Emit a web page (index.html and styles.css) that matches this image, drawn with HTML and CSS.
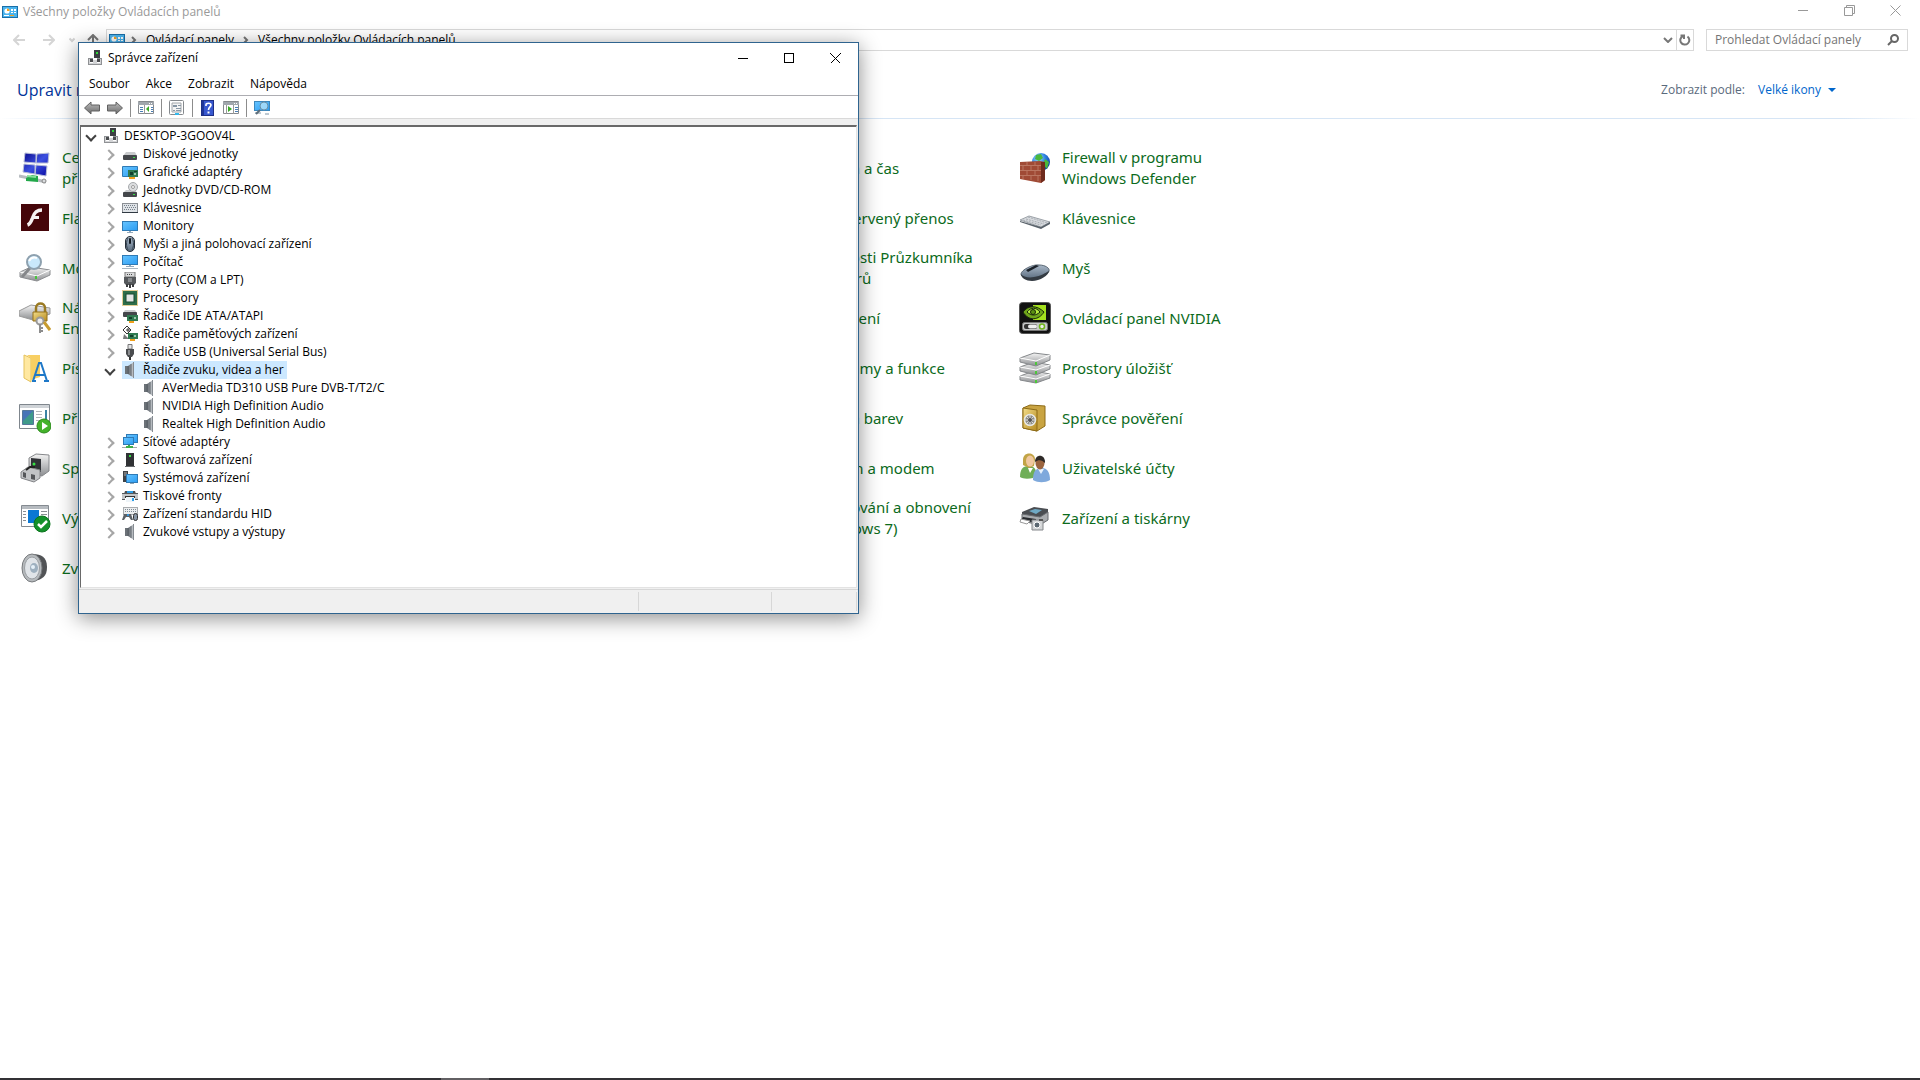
FILE: index.html
```html
<!DOCTYPE html>
<html lang="cs">
<head>
    <meta charset="UTF-8">
    <meta name="viewport" content="width=device-width, initial-scale=1.0">
    <link rel="stylesheet" href="styles.css">
    <title>Všechny položky Ovládacích panelů</title>
</head>
<body>

    <!-- icon definitions -->
    <svg class="sprite" aria-hidden="true">
        <defs>
            <linearGradient id="blue" x1="0" y1="0" x2="1" y2="1"><stop offset="0" stop-color="#66c4ff"/><stop offset="1" stop-color="#2b9cf2"/></linearGradient>
            <linearGradient id="metal" x1="0" y1="0" x2="0" y2="1"><stop offset="0" stop-color="#f4f4f4"/><stop offset="1" stop-color="#8d8f92"/></linearGradient>
            <linearGradient id="cone" x1="0" y1="0" x2="1" y2="0"><stop offset="0" stop-color="#5b6168"/><stop offset="1" stop-color="#d5d9dd"/></linearGradient>
            <linearGradient id="gold" x1="0" y1="0" x2="1" y2="1"><stop offset="0" stop-color="#f3dd8a"/><stop offset="1" stop-color="#b58a1f"/></linearGradient>
            <linearGradient id="navy" x1="0" y1="0" x2="1" y2="1"><stop offset="0" stop-color="#0a0a8c"/><stop offset="0.5" stop-color="#3c50e0"/><stop offset="1" stop-color="#0606a0"/></linearGradient>
            <linearGradient id="gray-arrow" x1="0" y1="0" x2="0" y2="1"><stop offset="0" stop-color="#bdbdbd"/><stop offset="1" stop-color="#6a6a6a"/></linearGradient>
            <linearGradient id="slate" x1="0" y1="0" x2="0" y2="1"><stop offset="0" stop-color="#a9b8c8"/><stop offset="1" stop-color="#5c6d80"/></linearGradient>
            <radialGradient id="globe" cx="0.35" cy="0.3" r="0.8"><stop offset="0" stop-color="#9fe0ff"/><stop offset="0.5" stop-color="#2c7fe0"/><stop offset="1" stop-color="#0b2f94"/></radialGradient>
        </defs>

        <symbol id="i-panel" viewBox="0 0 16 14">
            <rect x="0.5" y="1.5" width="15" height="11" fill="#4ab4ee" stroke="#1a6fa8"/>
            <circle cx="5" cy="6" r="2.6" fill="#fff"/><path d="M5 6V3.4A2.6 2.6 0 0 1 7.6 6z" fill="#f6a21d"/>
            <path d="M9 4h2v2H9zM12 4h2v2h-2zM9 7h2v1H9zM12 7h2v1h-2z" fill="#fff"/>
            <path d="M2 10h5v1H2z" fill="#fff"/><path d="M8 10h4v1H8z" fill="#f6a21d"/>
        </symbol>
        <symbol id="i-devices" viewBox="0 0 16 16">
            <rect x="7" y="0" width="6" height="10" fill="#3c3f43"/><rect x="9" y="2" width="2" height="2" fill="#2fd83a"/>
            <rect x="1.5" y="8.500" width="13" height="6" fill="#d3d4d6" stroke="#8f9194"/>
            <path d="M3 9h3v4H3zM10 9h3v4h-3z" fill="#4b4d50"/><path d="M3 12h3v1H3zM10 12h3v1h-3zM6 8h4v2H6z" fill="#fff"/>
        </symbol>
        <symbol id="i-disk" viewBox="0 0 16 16">
            <path d="M4 6h9l2 4H1z" fill="#c9cbcd"/><rect x="1" y="9" width="14" height="5" rx="1" fill="#44474b"/><rect x="11" y="11" width="2" height="1" fill="#37e045"/>
        </symbol>
        <symbol id="i-gpu" viewBox="0 0 16 16">
            <path d="M0.500 2.500h15v10h-15z" fill="url(#blue)" stroke="#2f7ab5"/><rect x="6" y="6" width="10" height="7" fill="#2f7a50"/>
            <path d="M8 8h3v3H8zM12 7h3v1h-3z" fill="#123f2b"/><circle cx="13" cy="10" r="1" fill="#bfe3cd"/><path d="M7 13h6v2H7z" fill="#f0a01c"/>
        </symbol>
        <symbol id="i-dvd" viewBox="0 0 16 16">
            <path d="M4 8h9l2 3H1z" fill="#c9cbcd"/><circle cx="11" cy="5" r="4.500" fill="#dcdee0" stroke="#a6a9ac"/><circle cx="11" cy="5" r="1.500" fill="#fff" stroke="#999"/>
            <rect x="1" y="10" width="14" height="5" rx="1" fill="#44474b"/><rect x="11" y="12" width="2" height="1" fill="#37e045"/>
        </symbol>
        <symbol id="i-keys" viewBox="0 0 16 16">
            <rect x="0.500" y="3.500" width="15" height="9" fill="#dfe3e7" stroke="#8b8f94"/><path d="M0 12h16v1H0z" fill="#303942"/>
            <path d="M2 5.500h12M3 7.500h11M2 9.500h12" stroke="#76808a" stroke-dasharray="1 1"/>
        </symbol>
        <symbol id="i-monitor" viewBox="0 0 16 16">
            <rect x="0.500" y="3.500" width="15" height="9" fill="url(#blue)" stroke="#2f7ab5"/><path d="M7 13h2v1H7zM5 14h6v1H5z" fill="#93a9bb"/>
        </symbol>
        <symbol id="i-mouse" viewBox="0 0 16 16">
            <rect x="3.500" y="0.500" width="9" height="15" rx="4.500" fill="url(#slate)" stroke="#242d38"/><path d="M6 2c-2 4-2 8 0 12M10 2c2 4 2 8 0 12" stroke="#364452" fill="none"/><rect x="7" y="2" width="2" height="6" rx="1" fill="#111820"/>
        </symbol>
        <symbol id="i-pc" viewBox="0 0 16 16">
            <rect x="0.500" y="1.500" width="15" height="9" fill="url(#blue)" stroke="#2f7ab5"/><path d="M7 11h2v1H7zM4 12h8v1H4z" fill="#93a9bb"/><path d="M0 14h16v1H0z" fill="#a9b7c3"/>
        </symbol>
        <symbol id="i-port" viewBox="0 0 16 16">
            <path d="M3 0h10v5H3z" fill="#d8d9da" stroke="#777"/><path d="M5 2h1v1H5zM7 2h1v1H7zM9 2h1v1H9z" fill="#444"/>
            <path d="M2 5h12v6l-2 2H4l-2-2z" fill="#55585b"/><path d="M6 6h4v4H6z" fill="#85888b"/><path d="M4 12h2v3H4zM10 12h2v3h-2zM7 12h2v4H7z" fill="#3a3c3f"/>
        </symbol>
        <symbol id="i-cpu" viewBox="0 0 16 16">
            <rect x="0.500" y="0.500" width="15" height="15" fill="none" stroke="#c79a2b" stroke-dasharray="1 1"/><rect x="1" y="1" width="14" height="14" fill="#2d6d4a"/><rect x="4" y="4" width="8" height="8" fill="#e4e6e5" stroke="#174a30"/>
        </symbol>
        <symbol id="i-ide" viewBox="0 0 16 16">
            <path d="M3 2h10l2 3H1z" fill="#c9cbcd"/><rect x="1" y="4" width="14" height="5" rx="1" fill="#44474b"/><rect x="5" y="7" width="11" height="6" fill="#2f7a50"/>
            <path d="M7 9h3v2H7z" fill="#123f2b"/><circle cx="13" cy="10" r="1" fill="#bfe3cd"/><path d="M7 13h5v2H7z" fill="#f0a01c"/>
        </symbol>
        <symbol id="i-mem" viewBox="0 0 16 16">
            <path d="M5 0l4 4-4 4-4-4z" fill="#fff" stroke="#333"/><path d="M4 4h4M6 2v4" stroke="#333"/><path d="M2 8l5 5H1z" fill="#77797b"/><rect x="6" y="7" width="10" height="6" fill="#2f7a50"/>
            <path d="M8 9h3v2H8z" fill="#123f2b"/><circle cx="13" cy="10" r="1" fill="#bfe3cd"/><path d="M8 13h5v2H8z" fill="#f0a01c"/>
        </symbol>
        <symbol id="i-usb" viewBox="0 0 16 16">
            <path d="M6 0.500h4V5H6z" fill="#e2e3e4" stroke="#777"/><path d="M4 5h8v5l-2 3H6l-2-3z" fill="#4a4c4f"/><path d="M6 6h2v5H6z" fill="#8a8c8f"/><path d="M7 13h2v3H7z" fill="#333"/>
        </symbol>
        <symbol id="i-sound" viewBox="0 0 16 16">
            <path d="M3 4h3v8H3z" fill="#6c7278"/><path d="M6 4l6-4v16l-6-4z" fill="url(#cone)"/><path d="M6 4v8M9 2v12" stroke="#4f555b" stroke-width="0.600"/><path d="M11 0h1v16h-1z" fill="#858b91"/>
        </symbol>
        <symbol id="i-net" viewBox="0 0 16 16">
            <rect x="4.500" y="0.500" width="11" height="8" fill="url(#blue)" stroke="#2f7ab5"/><rect x="1.500" y="3.500" width="10" height="7" fill="url(#blue)" stroke="#2f7ab5"/><path d="M6 11h2v2H6zM4 12h7v2H4z" fill="#3fae49"/><path d="M0 13h4v1H0zM11 13h4v1h-4z" fill="#a6a9ab"/>
        </symbol>
        <symbol id="i-soft" viewBox="0 0 16 16"><rect x="4" y="1" width="8" height="13" fill="#303235"/><rect x="7" y="3" width="2" height="2" fill="#35df42"/><path d="M3 14h10v1H3z" fill="#66696c"/></symbol>
        <symbol id="i-system" viewBox="0 0 16 16">
            <rect x="1" y="1" width="5" height="11" fill="#3e4246"/><path d="M2 3h3M2 5h3" stroke="#aaa"/><rect x="4.500" y="4.500" width="11" height="8" fill="url(#blue)" stroke="#2f7ab5"/><path d="M8 13h4v1H8z" fill="#8fa5b5"/>
        </symbol>
        <symbol id="i-printer" viewBox="0 0 16 16">
            <path d="M3 3h10l1 3H2z" fill="#4c4f53"/><path d="M5 3h6v3H5z" fill="#2f9fe8"/><path d="M0 6h16v6h-3V9H3v3H0z" fill="#c3c5c7"/><path d="M0 5h16v1H0zM0 11h3v1H0zM13 11h3v1h-3z" fill="#55585b"/><path d="M3 8h10v2H3z" fill="#333"/><path d="M4 9h8v5H4z" fill="#eef4f8"/><path d="M10 10h2v3h-2z" fill="#2f9fe8"/>
        </symbol>
        <symbol id="i-hid" viewBox="0 0 16 16">
            <rect x="1.500" y="1.500" width="14" height="7" fill="#eceeef" stroke="#a9acaf"/><path d="M3 3.500h11M3 5.500h11" stroke="#7f8b96" stroke-dasharray="1 1"/><path d="M0 14l2-6h7l2 6H9L7 11H4l-2 3z" fill="#5c6166"/><circle cx="6" cy="9" r="1" fill="#2ea5ff"/><rect x="11.500" y="7.500" width="4" height="7" rx="2" fill="#8795a5" stroke="#333"/>
        </symbol>

        <symbol id="t-back" viewBox="0 0 16 14"><path d="M0.500 7L7 1v3h8.500v6H7v3z" fill="url(#gray-arrow)" stroke="#606060"/></symbol>
        <symbol id="t-next" viewBox="0 0 16 14"><path d="M15.500 7L9 1v3H0.500v6H9v3z" fill="url(#gray-arrow)" stroke="#606060"/></symbol>
        <symbol id="t-tree" viewBox="0 0 16 14">
            <path d="M0.500 0.500h15v12h-15z" fill="#fff" stroke="#868a8e"/><path d="M0 1h16v3H0z" fill="#a1a7ad"/><path d="M11 2h1v1h-1zM13 2h1v1h-1z" fill="#fff"/><path d="M6.500 4v9" stroke="#999"/><path d="M2 6.500h3M2 8.500h3M2 10.500h3M13 6.500h2M13 8.500h2M13 10.500h2" stroke="#4a7fb5"/><path d="M11 5v6L8 8z" fill="#3aa925"/>
        </symbol>
        <symbol id="t-props" viewBox="0 0 16 16">
            <rect x="0.500" y="0.500" width="14" height="14" rx="1" fill="#fff" stroke="#85898d"/><path d="M3 3h9v9H3z" fill="#f4f4f4" stroke="#a2a6aa"/><path d="M4 5h4v2H4zM9 5h3v1H9zM4 8.500h2M7 8h5v1H7zM4 10h2v1H4zM7 10h5v1H7z" fill="#8897a5"/><path d="M6 13h4v2H6z" fill="#30b9ee"/>
        </symbol>
        <symbol id="t-help" viewBox="0 0 14 16"><rect x="0.500" y="0.500" width="12" height="15" fill="#3757cf" stroke="#1e2f86"/><path d="M1 1h2v14H1z" fill="#1e3598"/><path d="M5 6V4.500C5 3 10 2.500 10 5c0 2-2.500 2-2.500 5" fill="none" stroke="#fff" stroke-width="1.600"/><path d="M6.500 11.500h2v2h-2z" fill="#fff"/></symbol>
        <symbol id="t-actions" viewBox="0 0 16 14">
            <path d="M0.500 0.500h15v12h-15z" fill="#fff" stroke="#868a8e"/><path d="M0 1h16v3H0z" fill="#a1a7ad"/><path d="M11 2h1v1h-1zM13 2h1v1h-1z" fill="#fff"/><path d="M10.500 4v9M3.500 4v9" stroke="#999"/><path d="M12 6.500h3M12 8.500h3M12 10.500h3" stroke="#4a7fb5"/><path d="M5 5v6l4-3z" fill="#3aa925"/>
        </symbol>
        <symbol id="t-scan" viewBox="0 0 16 16">
            <rect x="0.500" y="1.500" width="15" height="9" fill="url(#blue)" stroke="#3d88bd"/><path d="M1 13h6M11 14h4" stroke="#7d93a5"/><path d="M6 10l-4 4" stroke="#5d6c78" stroke-width="2"/><circle cx="10" cy="6" r="4" fill="#b3e2fa" fill-opacity="0.800" stroke="#6a90a8"/>
        </symbol>

        <symbol id="b-network" viewBox="0 0 32 32">
            <path d="M6 1l11 1v9L5 10zM18 2l12-1-1 10H17zM5 12l11 1v9L4 20zM17 13l11 1-1 10-11-2z" fill="url(#navy)" stroke="#b9bfd8"/>
            <path d="M0 24l10 2 17 4" stroke="#b7bcc0" stroke-width="3"/><path d="M7 26l6-3 6 1v6l-12-1z" fill="#22a84a"/><path d="M8 24l9 1" stroke="#86e09b" stroke-width="2"/><circle cx="25" cy="29" r="2" fill="#d8dbdd" stroke="#888"/>
        </symbol>
        <symbol id="b-flash" viewBox="0 0 32 32">
            <rect x="2" y="2" width="28" height="27" fill="#450509"/><path d="M23 8c-6 0-8 3-9.500 8-1.500 4-2 6-5 7" fill="none" stroke="#f6f1f1" stroke-width="3.500"/><path d="M13 15.500h7" stroke="#f6f1f1" stroke-width="3"/>
        </symbol>
        <symbol id="b-index" viewBox="0 0 32 32">
            <path d="M1 20l11-5 19 3v5l-13 6-17-4z" fill="url(#metal)" stroke="#8b8d90"/><path d="M1 20l17 4 13-6" fill="none" stroke="#fff"/><path d="M11 16L3 25" stroke="#85878a" stroke-width="3"/><circle cx="15" cy="10" r="7" fill="#c9e8fb" stroke="#8ea1af" stroke-width="2"/><path d="M10 9c2-4 5-4 8-3" stroke="#fff" stroke-width="2" fill="none"/><path d="M16 24h2v3h-2z" fill="#46c53a"/>
        </symbol>
        <symbol id="b-lock" viewBox="0 0 32 32">
            <path d="M0 9l12-6 19 3v6L14 18 0 14z" fill="url(#metal)" stroke="#999"/><path d="M17 11V6c0-6 9-6 9 0v5" fill="none" stroke="#9a7a22" stroke-width="2.500"/><path d="M14 10h14v9H14z" fill="url(#gold)" stroke="#94701a"/>
            <circle cx="21" cy="19" r="3.500" fill="#eee" stroke="#999" stroke-width="2"/><path d="M21 22v9M21 26h3M21 29h3" stroke="#8d8d8d" stroke-width="2"/><path d="M25 20l6 8" stroke="#c79b2e" stroke-width="3"/>
        </symbol>
        <symbol id="b-fonts" viewBox="0 0 32 32">
            <path d="M5 3l7 3v24l-7-4z" fill="#ffe8a0" stroke="#e5c25d"/><path d="M8 3h13v22l-9 3V6z" fill="#f8cf63"/><path d="M14 29l6-18h2l6 18M16.500 23h9M13 29h4M25 29h5" fill="none" stroke="#1e78c8" stroke-width="2"/>
        </symbol>
        <symbol id="b-remote" viewBox="0 0 32 32">
            <path d="M0.500 2.500h30v24h-30z" fill="#fff" stroke="#7f868d"/><path d="M1 3h29v3H1z" fill="#cfd3d7"/><path d="M3.500 8.500h11v14h-11z" fill="#3f9a8a" stroke="#56779a"/><path d="M4 9h10L4 19z" fill="#4774b7"/><path d="M17 9.500h6M17 12.500h6M17 15.500h6M17 18.500h5" stroke="#b2b6ba"/><path d="M26 8h2v12h-2z" fill="#3b83a5"/><circle cx="25" cy="24" r="7" fill="#43b22a" stroke="#2b8a1b"/><path d="M23 20l6 4-6 4z" fill="#fff"/>
        </symbol>
        <symbol id="b-devman" viewBox="0 0 32 32">
            <path d="M10 6l7-4 13 1v16l-7 5-13-2z" fill="url(#metal)" stroke="#85878a"/><path d="M12 6l10 1v13l-10-1z" fill="#303236"/><circle cx="15" cy="12" r="1.500" fill="#35e143"/><path d="M2 20l7-5 12 3v8l-6 4-13-4z" fill="#c2c4c6" stroke="#828487"/><path d="M4 20l3 1v5l-3-1zM12 22l4 1v5l-4-1z" fill="#55575a"/><path d="M7 18l4-3h5" stroke="#222" stroke-width="2" fill="none"/>
        </symbol>
        <symbol id="b-default" viewBox="0 0 32 32">
            <path d="M2.500 3.500h27v21h-27z" fill="#fff" stroke="#858b91"/><path d="M3 4h26v3H3z" fill="#b6bbc0"/><path d="M9 8h11v13H9z" fill="#0b78d4"/><path d="M4 9.500h3M4 12.500h3M4 15.500h3M4 18.500h3M22 9.500h6M22 12.500h6" stroke="#8a8f94"/><circle cx="23" cy="22" r="8" fill="#14912a" stroke="#0b741e"/><path d="M19 22l3 3 6-6" fill="none" stroke="#fff" stroke-width="2.500"/>
        </symbol>
        <symbol id="b-speaker" viewBox="0 0 32 32">
            <path d="M14 2c8 0 14 3 14 13s-5 12-12 14z" fill="#515356"/><ellipse cx="13" cy="16" rx="10" ry="14" fill="#b6babd" stroke="#777a7d"/><ellipse cx="13" cy="16" rx="7.500" ry="11" fill="#e0e4e8" stroke="#9b9fa3"/><ellipse cx="15" cy="16" rx="4" ry="5" fill="#9eb0bf"/><circle cx="14" cy="15" r="2" fill="#e5f0f8"/>
        </symbol>
        <symbol id="b-firewall" viewBox="0 0 32 32">
            <circle cx="22" cy="10" r="9" fill="url(#globe)"/><path d="M17 3l5-1 2 4-4 3-4-2zM26 7l4 3-2 7-4-5z" fill="#4bb83d"/>
            <path d="M1 10l20-1 5 1v18l-4 3-21-4z" fill="#a04a35"/><path d="M22 10l4 0v18l-4 3z" fill="#6f2b1d"/><path d="M1 13.500h21M1 18.500h21M1 23.500h21M8 10v3M16 10v3M4 14v4M12 14v4M19 14v4M8 19v4M16 19v4M4 24v3M12 24v4M19 24v5" stroke="#c58872" stroke-width="0.700" fill="none"/>
        </symbol>
        <symbol id="b-keyboard" viewBox="0 0 32 32">
            <path d="M1 18l9-4 21 6-9 5z" fill="#d7dade" stroke="#9da3a9"/><path d="M1 19l21 6 9-5v2l-9 5L1 20z" fill="#59626b"/><path d="M4 18l18 5M7 17l18 5M9 15l19 6" stroke="#a9aeb4" stroke-dasharray="2 1"/>
        </symbol>
        <symbol id="b-mouse" viewBox="0 0 32 32">
            <path d="M2 22c0-4 12-10 18-9 6 0 11 3 10 6 0 3-11 8-18 8-5 0-10-2-10-5z" fill="url(#slate)" stroke="#596673"/><path d="M2 22c2 3 8 4 13 3 7-1 11-4 15-6 0 4-9 10-17 10-6 0-11-3-11-7z" fill="#343b43"/><path d="M7 18l10-5 3 1-11 6z" fill="#1c232b"/>
        </symbol>
        <symbol id="b-nvidia" viewBox="0 0 32 32">
            <rect x="0.500" y="0.500" width="31" height="31" rx="3" fill="#111" stroke="#555"/><path d="M14 3h13v15H14z" fill="#a4e01e"/><path d="M4 10c5-7 14-7 21 0-5 8-15 10-21 0z" fill="#6fa51b" stroke="#16240a"/><path d="M8 10c4-5 9-5 13 0-4 4-9 4-13 0z" fill="#b6ee3e" stroke="#16240a"/><circle cx="14" cy="10" r="2.500" fill="#5c9212" stroke="#16240a"/><rect x="3.500" y="20.500" width="25" height="8" rx="2" fill="#c7c9c9" stroke="#777"/><rect x="5" y="22" width="13" height="5" rx="2" fill="#333"/><rect x="9" y="22.500" width="9" height="4" rx="2" fill="#eee"/><circle cx="23" cy="24.500" r="2.500" fill="#eee" stroke="#70b51c" stroke-width="1.500"/>
        </symbol>
        <symbol id="b-storage" viewBox="0 0 32 32">
            <path d="M1 24l14-5 16 3v4l-14 5-16-3z" fill="url(#metal)" stroke="#85888b"/><path d="M1 24l16 3 14-5" fill="none" stroke="#fff"/><path d="M16 28h2v3h-2z" fill="#4cc83a"/>
            <path d="M1 15l14-5 16 3v4l-14 6-16-4z" fill="url(#metal)" stroke="#85888b"/><path d="M1 15l16 3 14-5" fill="none" stroke="#fff"/><path d="M16 19h2v3h-2z" fill="#4cc83a"/>
            <path d="M1 6l14-5 16 2v5l-14 6-16-4z" fill="url(#metal)" stroke="#85888b"/><path d="M1 6l16 3 14-6" fill="none" stroke="#fff"/><path d="M16 10h2v3h-2z" fill="#4cc83a"/>
        </symbol>
        <symbol id="b-safe" viewBox="0 0 32 32">
            <path d="M4 6l7-3 15 1v20l-8 5-14-3z" fill="#c9a442" stroke="#8d6b17"/><path d="M4 6l14 2v21L4 26z" fill="url(#gold)" stroke="#8d6b17"/><circle cx="11" cy="18" r="5.500" fill="#8e8e88" stroke="#e9e9e4" stroke-width="1.500"/><path d="M11 12v12M5 18h12M7 14l8 8M15 14l-8 8" stroke="#ddd"/><circle cx="11" cy="18" r="2" fill="#555"/>
        </symbol>
        <symbol id="b-users" viewBox="0 0 32 32">
            <path d="M1 25c0-8 3-11 9-11 5 0 7 3 7 7l-3 5c-5 1-10 1-13-1z" fill="#6fae57"/><path d="M9 16l2 5 3-5z" fill="#fff"/><path d="M4 8c0-9 12-8 12-1l-1 7-5 2-6-3z" fill="#c2a446"/><ellipse cx="11" cy="9" rx="4" ry="5.500" fill="#f0c8a0"/>
            <path d="M14 28c0-8 2-12 9-12 5 0 8 4 8 12-5 3-12 3-17 0z" fill="#7fa9dc"/><path d="M19 17l3 5 3-5z" fill="#e8f2fc"/><ellipse cx="21" cy="11" rx="4.500" ry="6.500" fill="#9b6540"/><path d="M16 10c0-9 11-8 10 1-3-3-6-4-10-1z" fill="#2e2a28"/>
        </symbol>
        <symbol id="b-printer" viewBox="0 0 32 32">
            <path d="M3 10l12-5 14 2v5l-8 5-18-4z" fill="#4a4d51"/><path d="M10 9l6-2 7 1-6 4z" fill="#6fa9c4"/><path d="M3 12l18 3 8-5v8l-8 5-18-4z" fill="#a9acaf" stroke="#686b6f"/><path d="M4 15l13 2v4L2 18z" fill="#292c30"/><path d="M2 17l9 2-3 3-7-2z" fill="#fff" stroke="#999"/>
            <path d="M13 18h11v10H13z" fill="#d4d6d8" stroke="#85888b"/><path d="M20 17h4v2h-4z" fill="#555"/><circle cx="18" cy="23" r="3" fill="#5c6872" stroke="#fff"/>
        </symbol>
    </svg>

    <main class="explorer">
        <header class="titlebar">
            <svg class="icon-sm"><use href="#i-panel"/></svg>
            <h1>Všechny položky Ovládacích panelů</h1>
            <div class="win-buttons">
                <button aria-label="Minimalizovat"><svg viewBox="0 0 11 11"><path d="M0 5.500h10"/></svg></button>
                <button aria-label="Obnovit"><svg viewBox="0 0 11 11"><path d="M0.500 2.500h8v8h-8zM2.500 2.500v-2h8v8h-2"/></svg></button>
                <button aria-label="Zavřít"><svg viewBox="0 0 11 11"><path d="M0.500 0.500l10 10M10.500 0.500l-10 10"/></svg></button>
            </div>
        </header>

        <nav class="navbar">
            <div class="history">
                <button aria-label="Zpět"><svg viewBox="0 0 12 12"><path d="M12 6H1M6 1L1 6l5 5"/></svg></button>
                <button aria-label="Vpřed"><svg viewBox="0 0 12 12"><path d="M0 6h11M6 1l5 5-5 5"/></svg></button>
                <button class="recent" aria-label="Poslední umístění"><svg viewBox="0 0 6 6"><path d="M0.500 1.500L3 4l2.500-2.500"/></svg></button>
                <button class="up" aria-label="Nahoru"><svg viewBox="0 0 12 12"><path d="M6 12V1M1 6l5-5 5 5"/></svg></button>
            </div>
            <div class="address">
                <svg class="icon-sm"><use href="#i-panel"/></svg>
                <svg class="crumb-arrow" viewBox="0 0 6 8"><path d="M1 1l3 3-3 3"/></svg>
                <a href="#">Ovládací panely</a>
                <svg class="crumb-arrow" viewBox="0 0 6 8"><path d="M1 1l3 3-3 3"/></svg>
                <a href="#">Všechny položky Ovládacích panelů</a>
                <button class="drop" aria-label="Předchozí umístění"><svg viewBox="0 0 10 6"><path d="M1 1l4 4 4-4"/></svg></button>
                <button class="refresh" aria-label="Aktualizovat"><svg viewBox="0 0 12 12"><path d="M8.500 2.500A4.500 4.500 0 1 1 4 2M1.500 1.500H5V5"/></svg></button>
            </div>
            <div class="search">
                <input type="text" aria-label="Prohledat Ovládací panely" placeholder="Prohledat Ovládací panely">
                <svg viewBox="0 0 12 12"><circle cx="7.500" cy="4.500" r="3.500"/><path d="M5 7l-4 4"/></svg>
            </div>
        </nav>

        <section class="heading">
            <h2>Upravit nastavení počítače</h2>
            <div class="view-by">
                <span>Zobrazit podle:</span>
                <button>Velké ikony<i class="caret"></i></button>
            </div>
        </section>

        <div class="items">
            <div class="column first">
                <a href="#"><svg><use href="#b-network"/></svg><span>Centrum síťových<br>připojení a sdílení</span></a>
                <a href="#"><svg><use href="#b-flash"/></svg><span>Flash Player</span></a>
                <a href="#"><svg><use href="#b-index"/></svg><span>Možnosti indexování</span></a>
                <a href="#"><svg><use href="#b-lock"/></svg><span>Nástroj BitLocker Drive<br>Encryption</span></a>
                <a href="#"><svg><use href="#b-fonts"/></svg><span>Písma</span></a>
                <a href="#"><svg><use href="#b-remote"/></svg><span>Připojení RemoteApp</span></a>
                <a href="#"><svg><use href="#b-devman"/></svg><span>Správce zařízení</span></a>
                <a href="#"><svg><use href="#b-default"/></svg><span>Výchozí programy</span></a>
                <a href="#"><svg><use href="#b-speaker"/></svg><span>Zvuk</span></a>
            </div>
            <div class="column fourth">
                <a href="#"><svg></svg><span>Datum a čas</span></a>
                <a href="#"><svg></svg><span>Infračervený přenos</span></a>
                <a href="#"><svg></svg><span>Možnosti Průzkumníka<br>souborů</span></a>
                <a href="#"><svg></svg><span>Obnovení</span></a>
                <a href="#"><svg></svg><span>Programy a funkce</span></a>
                <a href="#"><svg></svg><span>Správa barev</span></a>
                <a href="#"><svg></svg><span>Telefon a modem</span></a>
                <a href="#"><svg></svg><span>Zálohování a obnovení<br>(Windows 7)</span></a>
            </div>
            <div class="column fifth">
                <a href="#"><svg><use href="#b-firewall"/></svg><span>Firewall v programu<br>Windows Defender</span></a>
                <a href="#"><svg><use href="#b-keyboard"/></svg><span>Klávesnice</span></a>
                <a href="#"><svg><use href="#b-mouse"/></svg><span>Myš</span></a>
                <a href="#"><svg><use href="#b-nvidia"/></svg><span>Ovládací panel NVIDIA</span></a>
                <a href="#"><svg><use href="#b-storage"/></svg><span>Prostory úložišť</span></a>
                <a href="#"><svg><use href="#b-safe"/></svg><span>Správce pověření</span></a>
                <a href="#"><svg><use href="#b-users"/></svg><span>Uživatelské účty</span></a>
                <a href="#"><svg><use href="#b-printer"/></svg><span>Zařízení a tiskárny</span></a>
            </div>
        </div>
    </main>

    <footer class="taskbar"><div class="task-active"></div></footer>

    <!-- device manager window -->
    <section class="window">
        <header class="win-title">
            <svg class="icon"><use href="#i-devices"/></svg>
            <h2>Správce zařízení</h2>
            <div class="win-buttons">
                <button aria-label="Minimalizovat"><svg viewBox="0 0 11 11"><path d="M0 5.500h10"/></svg></button>
                <button aria-label="Maximalizovat"><svg viewBox="0 0 11 11"><path d="M0.500 0.500h9v9h-9z"/></svg></button>
                <button aria-label="Zavřít"><svg viewBox="0 0 11 11"><path d="M0.500 0.500l10 10M10.500 0.500l-10 10"/></svg></button>
            </div>
        </header>
        <nav class="menu">
            <button>Soubor</button>
            <button>Akce</button>
            <button>Zobrazit</button>
            <button>Nápověda</button>
        </nav>
        <div class="toolbar">
            <button aria-label="Zpět"><svg><use href="#t-back"/></svg></button>
            <button aria-label="Vpřed"><svg><use href="#t-next"/></svg></button>
            <i class="sep"></i>
            <button aria-label="Strom konzoly"><svg><use href="#t-tree"/></svg></button>
            <i class="sep"></i>
            <button aria-label="Vlastnosti"><svg><use href="#t-props"/></svg></button>
            <i class="sep"></i>
            <button aria-label="Nápověda"><svg><use href="#t-help"/></svg></button>
            <button aria-label="Podokno akcí"><svg><use href="#t-actions"/></svg></button>
            <i class="sep"></i>
            <button aria-label="Vyhledat změny hardwaru"><svg><use href="#t-scan"/></svg></button>
        </div>

        <div class="pane">
            <ul class="tree">
                <li>
                    <div class="row"><button class="toggle open" aria-label="Sbalit"></button><svg class="icon"><use href="#i-devices"/></svg><span>DESKTOP-3GOOV4L</span></div>
                    <ul>
                        <li class="row"><button class="toggle" aria-label="Rozbalit"></button><svg class="icon"><use href="#i-disk"/></svg><span>Diskové jednotky</span></li>
                        <li class="row"><button class="toggle" aria-label="Rozbalit"></button><svg class="icon"><use href="#i-gpu"/></svg><span>Grafické adaptéry</span></li>
                        <li class="row"><button class="toggle" aria-label="Rozbalit"></button><svg class="icon"><use href="#i-dvd"/></svg><span>Jednotky DVD/CD-ROM</span></li>
                        <li class="row"><button class="toggle" aria-label="Rozbalit"></button><svg class="icon"><use href="#i-keys"/></svg><span>Klávesnice</span></li>
                        <li class="row"><button class="toggle" aria-label="Rozbalit"></button><svg class="icon"><use href="#i-monitor"/></svg><span>Monitory</span></li>
                        <li class="row"><button class="toggle" aria-label="Rozbalit"></button><svg class="icon"><use href="#i-mouse"/></svg><span>Myši a jiná polohovací zařízení</span></li>
                        <li class="row"><button class="toggle" aria-label="Rozbalit"></button><svg class="icon"><use href="#i-pc"/></svg><span>Počítač</span></li>
                        <li class="row"><button class="toggle" aria-label="Rozbalit"></button><svg class="icon"><use href="#i-port"/></svg><span>Porty (COM a LPT)</span></li>
                        <li class="row"><button class="toggle" aria-label="Rozbalit"></button><svg class="icon"><use href="#i-cpu"/></svg><span>Procesory</span></li>
                        <li class="row"><button class="toggle" aria-label="Rozbalit"></button><svg class="icon"><use href="#i-ide"/></svg><span>Řadiče IDE ATA/ATAPI</span></li>
                        <li class="row"><button class="toggle" aria-label="Rozbalit"></button><svg class="icon"><use href="#i-mem"/></svg><span>Řadiče paměťových zařízení</span></li>
                        <li class="row"><button class="toggle" aria-label="Rozbalit"></button><svg class="icon"><use href="#i-usb"/></svg><span>Řadiče USB (Universal Serial Bus)</span></li>
                        <li>
                            <div class="row"><button class="toggle open" aria-label="Sbalit"></button><div class="selected"><svg class="icon"><use href="#i-sound"/></svg><span>Řadiče zvuku, videa a her</span></div></div>
                            <ul>
                                <li class="row leaf"><svg class="icon"><use href="#i-sound"/></svg><span>AVerMedia TD310 USB Pure DVB-T/T2/C</span></li>
                                <li class="row leaf"><svg class="icon"><use href="#i-sound"/></svg><span>NVIDIA High Definition Audio</span></li>
                                <li class="row leaf"><svg class="icon"><use href="#i-sound"/></svg><span>Realtek High Definition Audio</span></li>
                            </ul>
                        </li>
                        <li class="row"><button class="toggle" aria-label="Rozbalit"></button><svg class="icon"><use href="#i-net"/></svg><span>Síťové adaptéry</span></li>
                        <li class="row"><button class="toggle" aria-label="Rozbalit"></button><svg class="icon"><use href="#i-soft"/></svg><span>Softwarová zařízení</span></li>
                        <li class="row"><button class="toggle" aria-label="Rozbalit"></button><svg class="icon"><use href="#i-system"/></svg><span>Systémová zařízení</span></li>
                        <li class="row"><button class="toggle" aria-label="Rozbalit"></button><svg class="icon"><use href="#i-printer"/></svg><span>Tiskové fronty</span></li>
                        <li class="row"><button class="toggle" aria-label="Rozbalit"></button><svg class="icon"><use href="#i-hid"/></svg><span>Zařízení standardu HID</span></li>
                        <li class="row"><button class="toggle" aria-label="Rozbalit"></button><svg class="icon"><use href="#i-sound"/></svg><span>Zvukové vstupy a výstupy</span></li>
                    </ul>
                </li>
            </ul>
        </div>
        <footer class="status"><div class="wide"></div><div class="mid"></div><div class="small"></div></footer>
    </section>

</body>
</html>
```

FILE: styles.css
```css
* {
    margin: 0;
    padding: 0;
    box-sizing: border-box;
}

body {
    min-height: 100vh;
    display: flex;
    flex-direction: column;
    background: #fff;
    color: #000;
    font-family: "Open Sans", "Noto Sans", sans-serif;
    font-size: 12px;
    line-height: 18px;
}

button {
    background: none;
    border: none;
    font: inherit;
    color: inherit;
}

a {
    text-decoration: none;
    color: inherit;
}

ul {
    list-style: none;
}

svg {
    display: block;
    flex: none;
}

.sprite {
    position: absolute;
    width: 0;
    height: 0;
}

.icon {
    width: 16px;
    height: 16px;
}

.icon-sm {
    width: 16px;
    height: 14px;
}

/* control panel */

.explorer {
    flex: 1;
}

.titlebar {
    display: flex;
    align-items: center;
    height: 24px;
    padding-left: 2px;
    color: #999;
}

.titlebar h1 {
    margin-left: 5px;
    font-size: 12px;
    font-weight: normal;
}

.win-buttons {
    display: flex;
    margin-left: auto;
}

.win-buttons button {
    display: flex;
    align-items: center;
    justify-content: center;
    width: 46px;
    height: 22px;
}

.win-buttons svg {
    width: 11px;
    height: 11px;
    fill: none;
    stroke: currentColor;
}

.titlebar .win-buttons {
    margin-right: 2px;
    padding-bottom: 3px;
}

.navbar {
    display: flex;
    align-items: center;
    height: 32px;
    padding-right: 12px;
}

.history {
    display: flex;
    align-items: center;
    width: 106px;
    padding-left: 13px;
    gap: 18px;
    color: #d5d5d5;
}

.history svg {
    width: 12px;
    height: 12px;
    fill: none;
    stroke: currentColor;
    stroke-width: 2;
}

.history .recent svg {
    width: 6px;
    height: 6px;
}

.history .recent {
    margin-right: -6px;
    margin-left: -4px;
}

.history .up {
    color: #777;
}

.address {
    flex: 1;
    display: flex;
    align-items: center;
    height: 22px;
    padding-left: 2px;
    border: 1px solid #d9d9d9;
}

.address a {
    margin: 0 9px;
}

.crumb-arrow {
    width: 6px;
    height: 8px;
    fill: none;
    stroke: #777;
    stroke-width: 2;
}

.address .icon-sm {
    margin-right: 6px;
}

.address button {
    display: flex;
    align-items: center;
    justify-content: center;
    width: 17px;
    height: 20px;
    color: #777;
}

.address button svg {
    fill: none;
    stroke: currentColor;
    stroke-width: 2;
}

.address .drop {
    margin-left: auto;
}

.drop svg {
    width: 10px;
    height: 6px;
}

.address .refresh {
    border-left: 1px solid #d9d9d9;
}

.refresh svg {
    width: 12px;
    height: 12px;
}

.search {
    display: flex;
    align-items: center;
    width: 202px;
    height: 22px;
    margin-left: 12px;
    padding: 0 8px;
    border: 1px solid #d9d9d9;
}

.search input {
    flex: 1;
    min-width: 0;
    border: none;
    outline: none;
    font: inherit;
}

.search input::placeholder {
    color: #757575;
    opacity: 1;
}

.search svg {
    width: 12px;
    height: 12px;
    fill: none;
    stroke: #666;
    stroke-width: 2;
}

.heading {
    display: flex;
    align-items: center;
    justify-content: space-between;
    height: 63px;
    padding: 4px 84px 0 17px;
    background: linear-gradient(to right, #fff, #d6e5f5 4%, #d6e5f5 96%, #fff) bottom / 100% 1px no-repeat;
}

.heading h2 {
    font-size: 16px;
    font-weight: normal;
    color: #003399;
}

.view-by {
    display: flex;
    gap: 13px;
    color: #5a6a7c;
}

.view-by button {
    display: flex;
    align-items: center;
    gap: 7px;
    color: #0066cc;
}

.caret {
    border: 4px solid transparent;
    border-top-color: #0066cc;
    border-bottom: none;
}

.items {
    display: grid;
    grid-template-columns: repeat(5, 250px);
    padding: 24px 0 0 19px;
}

.first {
    grid-column: 1;
}

.fourth {
    grid-column: 4;
}

.fifth {
    grid-column: 5;
}

.column a {
    display: flex;
    align-items: center;
    gap: 11px;
    height: 50px;
    color: #0c6b1c;
    font-family: "Noto Sans", "Open Sans", sans-serif;
    font-size: 15px;
    line-height: 21px;
    white-space: nowrap;
}

.column svg {
    width: 32px;
    height: 32px;
}

.taskbar {
    height: 2px;
    padding-left: 441px;
    background: #333135;
}

.task-active {
    width: 48px;
    height: 2px;
    background: #626063;
}

/* device manager */

.window {
    position: absolute;
    left: 78px;
    top: 42px;
    width: 781px;
    background: #fff;
    border: 1px solid #2f648f;
    box-shadow: 0 4px 20px rgba(0, 0, 0, 0.45);
}

.win-title {
    display: flex;
    align-items: center;
    height: 30px;
    padding-left: 8px;
}

.win-title h2 {
    margin-left: 5px;
    font-size: 12px;
    font-weight: normal;
}

.win-title .win-buttons svg {
    shape-rendering: crispEdges;
}

.menu {
    display: flex;
    height: 23px;
    gap: 16px;
    padding: 2px 10px;
    border-bottom: 1px solid #adadb2;
}

.toolbar {
    display: flex;
    align-items: center;
    height: 23px;
    padding: 2px 0 0 5px;
    gap: 7px;
    border-bottom: 1px solid #d9d9d9;
}

.toolbar svg {
    width: 16px;
    height: 16px;
}

.sep {
    width: 1px;
    height: 18px;
    background: #8c8c8c;
}

.pane {
    padding: 6px 1px 1px;
    background: #f0f0f0;
}

.tree {
    height: 463px;
    border: 1px solid #e3e3e3;
    border-top: 2px solid #696969;
    border-left-color: #696969;
    background: #fff;
}

.tree ul {
    padding-left: 19px;
}

.tree ul ul {
    padding-left: 41px;
}

.row {
    display: flex;
    align-items: center;
    height: 18px;
    padding-left: 2px;
}

.row.leaf {
    padding-left: 0;
}

.row .icon {
    margin-right: 5px;
}

.toggle {
    width: 16px;
    height: 16px;
    margin-right: 4px;
}

.toggle::before {
    content: "";
    display: block;
    width: 6px;
    height: 6px;
    margin: 2px 0 0 3px;
    border-top: 2px solid #a6a6a6;
    border-right: 2px solid #a6a6a6;
    transform: rotate(45deg);
}

.toggle.open::before {
    margin: 0 0 0 4px;
    border-color: #404040;
    transform: rotate(135deg);
}

.selected {
    display: flex;
    align-items: center;
    height: 18px;
    padding-right: 3px;
    background: #cce8ff;
}

.status {
    display: flex;
    height: 24px;
    padding: 2px 1px;
    background: #f0f0f0;
    border-top: 1px solid #d7d7d7;
}

.status div {
    border-right: 1px solid #d7d7d7;
}

.wide {
    flex: 1;
}

.mid {
    width: 133px;
}

.small {
    width: 85px;
}
```
